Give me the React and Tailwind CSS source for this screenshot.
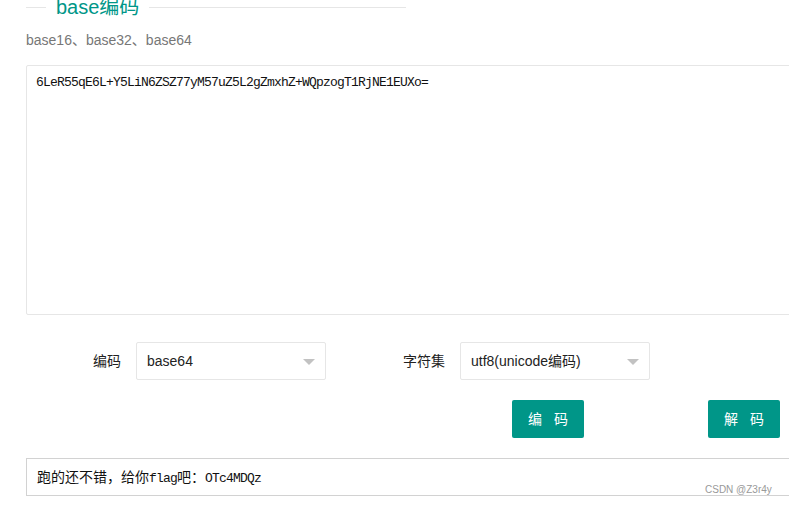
import React from "react";

const mono = { fontFamily: '"Liberation Mono", "Noto Sans CJK SC", monospace' };
const cjk = { fontFamily: '"Noto Sans CJK SC", sans-serif' };

function Select({ value }) {
  return (
    <div className="relative w-[190px] h-[38px] border border-[#e6e6e6] rounded-[2px] bg-white flex items-center pl-[10px] text-[14px] text-[#222]">
      {value}
      {/* caret */}
      <span className="absolute right-[10px] top-[16px] w-0 h-0 border-x-[6px] border-x-transparent border-t-[6px] border-t-[#c2c2c2]" />
    </div>
  );
}

export default function App() {
  return (
    <div className="relative w-[789px] h-[505px] overflow-hidden bg-white font-['Liberation_Sans','Noto_Sans_CJK_SC',sans-serif]">
      {/* Legend */}
      <div className="flex items-center h-[20px] mt-[-3px] ml-[26px] w-[380px]">
        <div className="w-[20px] border-t border-[#e6e6e6]" />
        <span className="px-[10px] text-[20px] leading-[20px] text-[#009688]">base编码</span>
        <div className="flex-1 border-t border-[#e6e6e6]" />
      </div>

      <p className="ml-[26px] mt-[13px] text-[14px] leading-[20px] text-[#777]">base16、base32、base64</p>

      {/* Input textarea */}
      <div
        className="ml-[26px] mt-[15px] w-[800px] h-[250px] border border-[#e6e6e6] rounded-[2px] pl-[9px] pt-[7px] text-[13px] tracking-[-0.8px] leading-[20px] text-[#111]"
        style={mono}
      >
        6LeR55qE6L+Y5LiN6ZSZ77yM57uZ5L2gZmxhZ+WQpzogT1RjNE1EUXo=
      </div>

      {/* Options */}
      <div className="flex items-center mt-[27px] ml-[26px]">
        <label className="w-[110px] pr-[15px] text-right text-[14px] text-[#222]">编码</label>
        <Select value="base64" />
        <label className="w-[110px] ml-[24px] pr-[15px] text-right text-[14px] text-[#222]">字符集</label>
        <Select value="utf8(unicode编码)" />
      </div>

      {/* Buttons */}
      <div className="flex mt-[20px] ml-[512px] gap-[124px]">
        <button className="w-[72px] h-[38px] rounded-[2px] bg-[#009688] text-white text-[14px] tracking-[4px] pl-[4px]">编 码</button>
        <button className="w-[72px] h-[38px] rounded-[2px] bg-[#009688] text-white text-[14px] tracking-[4px] pl-[4px]">解 码</button>
      </div>

      {/* Result */}
      <div className="ml-[26px] mt-[20px] w-[800px] h-[38px] border border-[#d2d2d2] flex items-center pl-[10px] text-[#111]">
        <p className="leading-[20px]">
          <span className="text-[14px]" style={cjk}>跑的还不错，给你</span>
          <span className="text-[13px] tracking-[-0.8px]" style={mono}>flag</span>
          <span className="text-[14px]" style={cjk}>吧：</span>
          <span className="text-[13px] tracking-[-0.8px]" style={mono}>OTc4MDQz</span>
        </p>
      </div>

      {/* watermark */}
      <span className="absolute left-[705px] top-[484px] text-[10px] leading-[12px] text-[#999]">CSDN @Z3r4y</span>
    </div>
  );
}
